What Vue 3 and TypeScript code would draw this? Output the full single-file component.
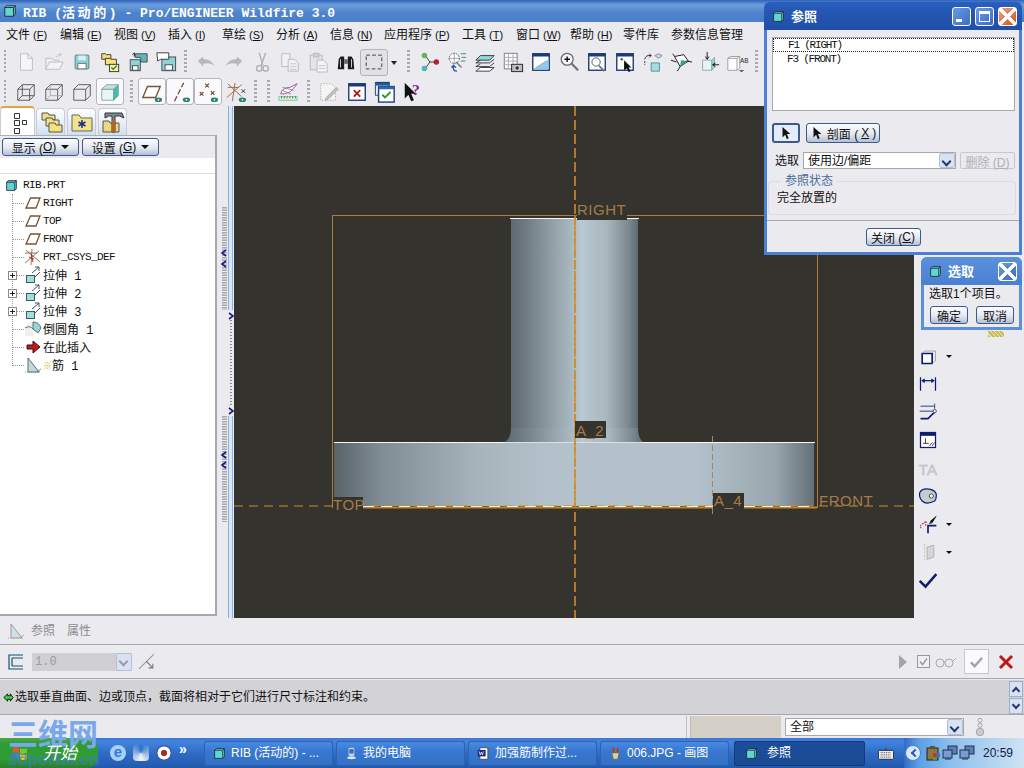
<script setup lang="ts">
const menus = [
  { name: "文件", key: "F" },
  { name: "编辑", key: "E" },
  { name: "视图", key: "V" },
  { name: "插入", key: "I" },
  { name: "草绘", key: "S" },
  { name: "分析", key: "A" },
  { name: "信息", key: "N" },
  { name: "应用程序", key: "P", cls: "wide" },
  { name: "工具", key: "T" },
  { name: "窗口", key: "W" },
  { name: "帮助", key: "H", cls: "tight" },
  { name: "零件库", cls: "lib" },
  { name: "参数信息管理" },
];

const topA = ["new", "open", "save", "saveall", "savecopy", "backup"];
const topB = ["undo", "redo", "cut", "copy", "paste", "binoc"];
const topC = ["dtree", "find", "layers", "tablecam", "viewwin", "zoom", "zoomwin", "pickwin", "orient", "spin", "datum", "annot"];
const secA = [
  { id: "wire" },
  { id: "hidden" },
  { id: "nohidden" },
  { id: "shaded", on: true },
];
const secB = [
  { id: "planeeye", on: true },
  { id: "axiseye", on: true },
  { id: "pointeye", on: true },
  { id: "csyseye" },
];
const secC = ["delwin", "checkwin", "helpq"];

const tree = [
  { icon: "t-plane", text: "RIGHT" },
  { icon: "t-plane", text: "TOP" },
  { icon: "t-plane", text: "FRONT" },
  { icon: "t-csys", text: "PRT_CSYS_DEF" },
  { icon: "t-ext", text: "拉伸 1", cn: true, plus: true },
  { icon: "t-ext", text: "拉伸 2", cn: true, plus: true },
  { icon: "t-ext", text: "拉伸 3", cn: true, plus: true },
  { icon: "t-round", text: "倒圆角 1", cn: true },
  { icon: "t-insert", text: "在此插入", cn: true },
  { icon: "t-rib", text: "筋 1", cn: true, star: true },
];

const sideIcons = ["s-box", "s-dim", "s-ref", "s-note", "s-ta", "s-blob", "s-sketch", "s-mirror", "s-ok"];
const sideDrop = ["s-box", "s-sketch", "s-mirror"];

const tasks = [
  { text: "RIB (活动的) - ...", icon: "cube" },
  { text: "我的电脑", icon: "pc" },
  { text: "加强筋制作过...", icon: "word" },
  { text: "006.JPG - 画图", icon: "paint" },
];
</script>

<template>
  <div class="app">
    <svg class="sprite" width="0" height="0">
      <defs>
        <symbol id="cube" viewBox="0 0 16 16"><path d="M2 4l2-2h10v10l-2 2H2z" fill="#5fd6d2" stroke="#223"/><path d="M12 14V4l2-2M12 4H2" fill="none" stroke="#223"/></symbol>
        <symbol id="cursor" viewBox="0 0 16 16"><path d="M4 1v12l3-3 2 5 2-1-2-5h4z" fill="#111"/></symbol>

        <symbol id="new" viewBox="0 0 24 24"><path d="M6 3h8l5 5v13H6z" fill="#f6f6f6" stroke="#bcbcc0"/><path d="M14 3v5h5" fill="none" stroke="#bcbcc0"/></symbol>
        <symbol id="open" viewBox="0 0 24 24"><path d="M3 20V8h7l2 2h5v2" fill="#efeff0" stroke="#bcbcc0"/><path d="M3 20l4-8h15l-4 8z" fill="#f3f3f4" stroke="#bcbcc0"/><path d="M14 7q3-4 6-3l-2-2m2 2l-2 2" fill="none" stroke="#bcbcc0"/></symbol>
        <symbol id="save" viewBox="0 0 24 24"><rect x="4.500" y="4.500" width="15" height="15" rx="1" fill="#8ed5d2" stroke="#5f7480"/><rect x="8" y="5" width="8" height="5" fill="#d9f2f1"/><rect x="7.500" y="13.500" width="9" height="6" fill="#fff" stroke="#5f7480"/></symbol>
        <symbol id="saveall" viewBox="0 0 24 24"><path d="M3 9V3h4l1 1h5v5z" fill="#f5e27a" stroke="#333"/><path d="M7 15V8h5l1 1h6v6z" fill="#f5e27a" stroke="#333"/><rect x="11.500" y="14.500" width="10" height="8" fill="#fbeea6" stroke="#333"/><path d="M13.500 18l2 2 4-4" fill="none" stroke="#2a8a2a" stroke-width="1.500"/></symbol>
        <symbol id="savecopy" viewBox="0 0 24 24"><rect x="3.500" y="9.500" width="11" height="12" fill="#8ed5d2" stroke="#445"/><rect x="6" y="16" width="6" height="5" fill="#fff" stroke="#445"/><path d="M9 3h13v9h-7V7H9z" fill="#5fb7b5" stroke="#445"/><path d="M8 6V2M8 2l-2 2" fill="none" stroke="#111"/></symbol>
        <symbol id="backup" viewBox="0 0 24 24"><rect x="7.500" y="6.500" width="15" height="15" fill="#8ed5d2" stroke="#445"/><rect x="11" y="15" width="8" height="6" fill="#fff" stroke="#445"/><path d="M2 2h13v7h-9l-3 2z" fill="#fff" stroke="#333"/></symbol>
        <symbol id="undo" viewBox="0 0 24 24"><path d="M3 11l6-5v3q8-1 12 7-5-4-12-2v3z" fill="#b8b8bc"/></symbol>
        <symbol id="redo" viewBox="0 0 24 24"><path d="M21 11l-6-5v3q-8-1-12 7 5-4 12-2v3z" fill="#b8b8bc"/></symbol>
        <symbol id="cut" viewBox="0 0 24 24"><path d="M9 2l4 14M16 2l-5 14" stroke="#b0b0b4" stroke-width="1.500" fill="none"/><circle cx="9" cy="19" r="3" fill="none" stroke="#b0b0b4" stroke-width="1.500"/><circle cx="16" cy="19" r="3" fill="none" stroke="#b0b0b4" stroke-width="1.500"/></symbol>
        <symbol id="copy" viewBox="0 0 24 24"><path d="M3 3h9v14H3z" fill="#f2f2f2" stroke="#b8b8bc"/><path d="M10 9h7l4 4v9H10z" fill="#f2f2f2" stroke="#b8b8bc"/><path d="M12 14h7M12 17h7M12 20h7" stroke="#c4c4c8"/></symbol>
        <symbol id="paste" viewBox="0 0 24 24"><rect x="3.500" y="4.500" width="13" height="16" fill="#e4e4e6" stroke="#b8b8bc"/><rect x="7" y="2.500" width="6" height="4" fill="#d0d0d2" stroke="#b8b8bc"/><path d="M11 10h7l4 4v9H11z" fill="#f4f4f4" stroke="#b8b8bc"/><path d="M13 16h7M13 19h7" stroke="#c4c4c8"/></symbol>
        <symbol id="binoc" viewBox="0 0 24 24"><path d="M4 9l2-3h4v14H3zM20 9l-2-3h-4v14h7z" fill="#1c1c1c"/><rect x="10" y="9" width="4" height="5" fill="#666"/><path d="M6 9v9M18 9v9" stroke="#ddd"/></symbol>
        <symbol id="selbox" viewBox="0 0 24 24"><rect x="3.500" y="4.500" width="17" height="15" fill="none" stroke="#333" stroke-dasharray="4 2.500"/></symbol>

        <symbol id="dtree" viewBox="0 0 24 24"><path d="M8 5l5 7h8M13 12l-5 7" stroke="#333" fill="none"/><circle cx="7" cy="5" r="3" fill="#5cb85c"/><circle cx="20" cy="12" r="3" fill="#b32030"/><circle cx="7" cy="19" r="3" fill="#4cb8b8"/></symbol>
        <symbol id="find" viewBox="0 0 24 24"><circle cx="9" cy="8" r="5.500" fill="#fff" stroke="#555" stroke-dasharray="2 1"/><path d="M9 2v12M3 8h12" stroke="#777" stroke-width=".7"/><path d="M16 3h6M17 7h5M16 11h5" stroke="#4a7d80"/><path d="M12 22q-5 0-4-6l-2 2m2-2l3 2" fill="none" stroke="#2450a8" stroke-width="1.500"/><path d="M11 12l6 6" stroke="#777" stroke-width="1.500"/></symbol>
        <symbol id="layers" viewBox="0 0 24 24"><path d="M7 5h15l-5 5H2z" fill="#8edcd8" stroke="#334"/><path d="M2 13l5-3M22 9l-5 4H2M2 17l5-3M22 13l-5 4H2" fill="none" stroke="#334"/><path d="M7 18h15l-5 4H2z" fill="#fff" stroke="#334"/></symbol>
        <symbol id="tablecam" viewBox="0 0 24 24"><rect x="2.500" y="2.500" width="14" height="17" fill="#fff" stroke="#777"/><path d="M2 7h15M2 11h15M2 15h15M7 3v17M12 3v17" stroke="#aaa"/><rect x="10.500" y="14.500" width="12" height="8" fill="#bbb" stroke="#222"/><circle cx="16.500" cy="18.500" r="2.500" fill="#333" stroke="#eee"/></symbol>
        <symbol id="viewwin" viewBox="0 0 24 24"><rect x="3" y="3" width="18" height="18" fill="#fff" stroke="#1d3a78" stroke-width="1.500"/><rect x="3" y="3" width="18" height="3" fill="#1d3a78"/><path d="M4 20l16-11v11z" fill="#8ec8ea"/><path d="M5 19l11-7" stroke="#777" stroke-dasharray="1 1"/></symbol>
        <symbol id="zoom" viewBox="0 0 24 24"><circle cx="10" cy="9" r="6.500" fill="#f6f6f6" stroke="#666" stroke-width="1.300"/><path d="M10 6v6M7 9h6" stroke="#111" stroke-width="1.500"/><path d="M15 14l7 7" stroke="#777" stroke-width="2.500"/></symbol>
        <symbol id="zoomwin" viewBox="0 0 24 24"><rect x="3" y="3" width="18" height="18" fill="#fff" stroke="#1d3a78" stroke-width="1.500"/><rect x="3" y="3" width="18" height="3" fill="#1d3a78"/><circle cx="11" cy="12" r="4.500" fill="#fff" stroke="#555"/><path d="M14 16l6 6" stroke="#777" stroke-width="2"/></symbol>
        <symbol id="pickwin" viewBox="0 0 24 24"><rect x="3" y="3" width="18" height="18" fill="#fff" stroke="#1d3a78" stroke-width="1.500"/><rect x="3" y="3" width="18" height="3" fill="#1d3a78"/><path d="M10 9h-3M8.500 7.500v3" stroke="#333"/><path d="M11 10v11l3-2 2 4 2-1-2-4h3z" fill="#111"/></symbol>
        <symbol id="orient" viewBox="0 0 24 24"><path d="M14 5l4-2 4 2-4 3z" fill="#cfd8e2" stroke="#789"/><path d="M10 13h9v9h-9z" fill="#9fe0dc" stroke="#5b8a90"/><path d="M3 9q1-5 7-4m0 0l-2-2m2 2l-2 2" fill="none" stroke="#222"/><path d="M3 11v4" stroke="#222" stroke-dasharray="2 1"/></symbol>
        <symbol id="spin" viewBox="0 0 24 24"><path d="M5 6l10-2 5 7-9 6z" fill="#fff" stroke="#111"/><path d="M12 10l8 1-9 6z" fill="#3c9c90"/><path d="M1 10l6 2M18 11l6 1M11 17l-3 5M5 6L3 3" stroke="#111" fill="none"/></symbol>
        <symbol id="datum" viewBox="0 0 24 24"><path d="M5 10h10v11H5z" fill="#e4f6f6" stroke="#8aa"/><path d="M15 10l3-3v11l-3 3z" fill="#8edcd8" stroke="#8aa"/><path d="M10 1v8M8 6l2 3 2-3M23 15h-7M19 13l-3 2 3 2" stroke="#111" fill="none"/></symbol>
        <symbol id="annot" viewBox="0 0 24 24"><path d="M2 8l3-2h10v13l-3 2H2z" fill="#fff" stroke="#999"/><path d="M12 21V8l3-2M12 8H2" fill="none" stroke="#999"/><path d="M14 21l3 2 3-2z" fill="#333"/></symbol>

        <symbol id="wire" viewBox="0 0 24 24"><path d="M3 9h13v12H3zM8 4h13v12H8zM3 9l5-5M16 9l5-5M3 21l5-5M16 21l5-5" fill="none" stroke="#555"/></symbol>
        <symbol id="hidden" viewBox="0 0 24 24"><path d="M3 9h13v12H3zM3 9l5-5h13v12l-5 5M16 9l5-5" fill="none" stroke="#555"/><path d="M8 4v12h13M8 16l-5 5" fill="none" stroke="#aaa"/></symbol>
        <symbol id="nohidden" viewBox="0 0 24 24"><path d="M3 9h13v12H3zM3 9l5-5h13v12l-5 5M16 9l5-5" fill="none" stroke="#555"/></symbol>
        <symbol id="shaded" viewBox="0 0 24 24"><path d="M3 9h13v12H3z" fill="#e6f6f4" stroke="#99a"/><path d="M3 9l5-5h13l-5 5z" fill="#bfe4e0" stroke="#99a"/><path d="M16 9l5-5v12l-5 5z" fill="#49b8b4" stroke="#6a9"/></symbol>
        <g id="eye"><ellipse cx="19" cy="20.500" rx="4" ry="2.500" fill="#2e7f70"/><circle cx="19" cy="20.500" r="1" fill="#dff"/></g>
        <symbol id="planeeye" viewBox="0 0 24 24"><path d="M2 18l5-12h14l-5 12z" fill="#fff" stroke="#7a5238" stroke-width="1.500"/><use href="#eye"/></symbol>
        <symbol id="axiseye" viewBox="0 0 24 24"><path d="M6 22L16 2" stroke="#7a5238" stroke-width="1.500" stroke-dasharray="6 2.500"/><use href="#eye"/></symbol>
        <symbol id="pointeye" viewBox="0 0 24 24"><path d="M9 3l4 4M13 3L9 7M3 12l4 4M7 12l-4 4M15 11l4 4M19 11l-4 4" stroke="#7a5238" stroke-width="1.300"/><use href="#eye"/></symbol>
        <symbol id="csyseye" viewBox="0 0 24 24"><path d="M3 7h12M11 2l-3 20M3 3l15 14M2 18l16-14" stroke="#a0623a"/><path d="M18 9l4 4M22 9l-4 4" stroke="#333"/><use href="#eye"/></symbol>
        <symbol id="measure" viewBox="0 0 24 24"><path d="M4 14q2-7 10-7l8-4-4 5q-3 5-10 6z" fill="#fff" stroke="#b040a8"/><path d="M5 10l10 4M6 7l12 3" stroke="#888"/><path d="M2 17h20v4H2z" fill="#e8f0f0" stroke="#6c8"/><path d="M5 17v2M8 17v2M11 17v2M14 17v2M17 17v2M20 17v2" stroke="#555"/></symbol>
        <symbol id="regen" viewBox="0 0 24 24"><path d="M3 3h12l4 4v14H3z" fill="#f4f4f4" stroke="#aaa" stroke-dasharray="1.500 1.500"/><path d="M22 9L11 20l-3 1 1-3L20 7z" fill="#c0c0c4" stroke="#aaa"/></symbol>
        <symbol id="delwin" viewBox="0 0 24 24"><rect x="3" y="3" width="18" height="18" fill="#fff" stroke="#1d3a78" stroke-width="1.500"/><rect x="3" y="3" width="18" height="3" fill="#1d3a78"/><path d="M8.500 10l7 7M15.500 10l-7 7" stroke="#b01818" stroke-width="2"/></symbol>
        <symbol id="checkwin" viewBox="0 0 24 24"><path d="M2 1h15v4H2z" fill="#1d5a9a"/><rect x="1.500" y="1.500" width="15" height="14" fill="none" stroke="#246"/><rect x="5" y="6" width="17" height="17" fill="#fff" stroke="#1d3a78" stroke-width="1.500"/><rect x="5" y="6" width="17" height="3" fill="#2a6ab8"/><path d="M9 15l3 3 6-6" fill="none" stroke="#2a9a2a" stroke-width="2"/></symbol>
        <symbol id="helpq" viewBox="0 0 24 24"><path d="M3 2v17l4-4 3 7 3-1-3-7h5z" fill="#111"/><text x="11" y="15" font-size="17" font-weight="700" font-family="Liberation Serif, serif" fill="#7c1e88">?</text></symbol>

        <symbol id="tab-tree" viewBox="0 0 24 24"><path d="M8.500 3.500h5v5h-5zM8.500 10.500h5v5h-5zM8.500 18.500h5v5h-5zM16.500 10.500h4v4h-4z" fill="#fff" stroke="#333"/></symbol>
        <symbol id="tab-folders" viewBox="0 0 24 24"><path d="M3 10V3h6l1 2h6v5z" fill="#efe08a" stroke="#555"/><path d="M7 16V8h6l1 2h6v6z" fill="#efe08a" stroke="#555"/><path d="M10 22v-9h6l1 2h6v7z" fill="#f5e27a" stroke="#555"/></symbol>
        <symbol id="tab-star" viewBox="0 0 24 24"><path d="M2 21V5h7l2 3h11v13z" fill="#f2e28a" stroke="#666"/><path d="M12 10v8M8.500 12l7 4M15.500 12l-7 4" stroke="#1a2f88" stroke-width="1.500"/></symbol>
        <symbol id="tab-tools" viewBox="0 0 24 24"><path d="M2 22V11h6l1 2h9v9z" fill="#efd777" stroke="#555"/><path d="M4 3h17l2 5q-4-3-9-2v16h-3V6q-3-1-7 2z" fill="#7b8994" stroke="#333"/><path d="M11 10h3v12h-3z" fill="#b5651d"/></symbol>

        <symbol id="t-plane" viewBox="0 0 18 18"><path d="M2 14L6.500 4H16l-4 10z" fill="#fff" stroke="#7a5238" stroke-width="1.300"/></symbol>
        <symbol id="t-csys" viewBox="0 0 18 18"><path d="M1 5h12M8 1l-1 16M2 2l14 12M1 15L15 3" stroke="#7a5238" stroke-width=".8"/><path d="M5 9l5 2M7 6l2 8" stroke="#b03020"/></symbol>
        <symbol id="t-ext" viewBox="0 0 18 18"><rect x="2.500" y="9.500" width="8" height="7" fill="#9ae0d8" stroke="#456"/><path d="M8 7l7-6M11 1h4v4" fill="none" stroke="#456"/><path d="M11 11l5-5" stroke="#456"/></symbol>
        <symbol id="t-round" viewBox="0 0 18 18"><path d="M1 16V8q2-6 8-6v14z" fill="#eef0ea"/><path d="M9 2q6 0 8 6l-3 5-5-4z" fill="#8ed8d8" stroke="#667"/><path d="M1 8q5-3 8 1" fill="none" stroke="#667"/></symbol>
        <symbol id="t-insert" viewBox="0 0 18 18"><path d="M3 7h6V3l7 6-7 6v-4H3z" fill="#c81818" stroke="#311"/></symbol>
        <symbol id="t-rib" viewBox="0 0 18 18"><path d="M4 2v14h11z" fill="#bcdcdc" stroke="#667"/><path d="M1 16h16" stroke="#888" stroke-dasharray="1 1"/><path d="M12 16l5-3" stroke="#888"/></symbol>

        <symbol id="s-box" viewBox="0 0 24 24"><path d="M5 9h12v12H5z" fill="#fff" stroke="#101c70" stroke-width="2"/><path d="M5 9l3-3h13v12l-4 3" fill="none" stroke="#9a9aa0"/></symbol>
        <symbol id="s-dim" viewBox="0 0 24 24"><path d="M3 4v16M21 4v16" stroke="#101c70" stroke-width="1.500"/><path d="M5 8h14" stroke="#101c70" stroke-width="1.500"/><path d="M4 8l4-3v6zM20 8l-4-3v6z" fill="#101c70"/></symbol>
        <symbol id="s-ref" viewBox="0 0 24 24"><path d="M3 5h16M20 2v6M2 11h16" stroke="#101c70"/><path d="M3 20h9l8-8" fill="none" stroke="#101c70" stroke-width="2"/><circle cx="20" cy="11" r="2" fill="#fff" stroke="#333"/></symbol>
        <symbol id="s-note" viewBox="0 0 24 24"><rect x="3" y="3" width="18" height="18" fill="#fff" stroke="#101c70" stroke-width="1.500"/><rect x="3" y="3" width="18" height="4" fill="#101c70"/><path d="M9 10v6M6 16h7M14 19l3-4M17 19l3-4" stroke="#222"/></symbol>
        <symbol id="s-ta" viewBox="0 0 24 24"><text x="1" y="20" font-family="Liberation Sans, sans-serif" font-size="18" fill="#d0d0d4" stroke="#b4b4b8" stroke-width=".5">TA</text></symbol>
        <symbol id="s-blob" viewBox="0 0 24 24"><path d="M2 8q3-6 13-4 7 2 7 7t-2 7q-10 5-15 0Q1 14 2 8z" fill="#c4ccd0" stroke="#101c70" stroke-width="1.500"/><circle cx="16" cy="12" r="2.500" fill="#fff" stroke="#333"/></symbol>
        <symbol id="s-sketch" viewBox="0 0 24 24"><path d="M4 17q-3-2 1-5t5-3l-1 5" fill="none" stroke="#b03838" stroke-dasharray="2 1" stroke-width="1.300"/><path d="M12 23v-9h10" fill="none" stroke="#101c70" stroke-width="2"/><path d="M22 2l-8 7 3 2 5-8zM13 12l2-3 2 2z" fill="#111"/></symbol>
        <symbol id="s-mirror" viewBox="0 0 24 24"><path d="M8 2v20" stroke="#bbb" stroke-dasharray="3 1.500"/><path d="M11 6l8-2v14l-8 3z" fill="#d6d6da" stroke="#aaa"/></symbol>
        <symbol id="s-ok" viewBox="0 0 24 24"><path d="M2 13l7 7L22 5" fill="none" stroke="#101c70" stroke-width="3"/></symbol>

        <symbol id="pc" viewBox="0 0 18 18"><rect x="5" y="1" width="8" height="12" rx="2" fill="#bcd4f0"/><rect x="6" y="3" width="6" height="6" fill="#3a6ac0"/><ellipse cx="9" cy="15" rx="6" ry="2" fill="#dfe8f2"/></symbol>
        <symbol id="word" viewBox="0 0 18 18"><path d="M4 1h11v16H4z" fill="#fff" stroke="#333"/><rect x="1" y="4" width="11" height="9" fill="#1c2a80"/><path d="M3 6l1.500 5 1.500-4 1.500 4L9 6" stroke="#fff" fill="none"/></symbol>
        <symbol id="paint" viewBox="0 0 18 18"><path d="M4 8h10l-2 9H6z" fill="#d7d1b0" stroke="#665"/><path d="M6 8V1M9 8V2M12 8V1" stroke="#c03020" stroke-width="2"/><path d="M9 8V2" stroke="#3a9a40" stroke-width="2"/></symbol>
      </defs>
    </svg>

    <header class="titlebar">
      <svg class="title-cube"><use href="#cube" /></svg>
      <span>RIB (<span class="title-cn">活动的</span>) - Pro/ENGINEER Wildfire 3.0</span>
    </header>

    <nav class="menubar">
      <span v-for="m in menus" :key="m.name" class="menu-item" :class="m.cls">
        {{ m.name }}<span v-if="m.key" class="key"> (<u>{{ m.key }}</u>)</span>
      </span>
    </nav>

    <section class="toolbars">
      <div class="tool-row">
        <i class="grip first"></i>
        <span v-for="t in topA" :key="t" class="tool"><svg><use :href="'#' + t" /></svg></span>
        <i class="grip"></i>
        <span v-for="t in topB" :key="t" class="tool"><svg><use :href="'#' + t" /></svg></span>
        <span class="tool active-sel"><svg><use href="#selbox" /></svg></span>
        <span class="drop-caret"></span>
        <i class="grip"></i>
        <span v-for="t in topC" :key="t" class="tool">
          <svg>
            <use :href="'#' + t" />
            <text v-if="t === 'annot'" x="14" y="12" class="ab">AB</text>
          </svg>
        </span>
        <i class="grip"></i>
      </div>
      <div class="tool-row">
        <i class="grip first"></i>
        <span v-for="t in secA" :key="t.id" class="tool" :class="{ on: t.on }"><svg><use :href="'#' + t.id" /></svg></span>
        <i class="grip roomy"></i>
        <span v-for="t in secB" :key="t.id" class="tool" :class="{ on: t.on }"><svg><use :href="'#' + t.id" /></svg></span>
        <i class="grip"></i>
        <i class="grip pair"></i>
        <span class="tool"><svg><use href="#measure" /></svg></span>
        <i class="grip roomy-left"></i>
        <span class="tool"><svg><use href="#regen" /></svg></span>
        <span v-for="t in secC" :key="t" class="tool"><svg><use :href="'#' + t" /></svg></span>
      </div>
    </section>

    <main class="workspace">
      <aside class="left">
        <div class="tabs">
          <span class="tab current"><svg><use href="#tab-tree" /></svg></span>
          <span class="tab"><svg><use href="#tab-folders" /></svg></span>
          <span class="tab"><svg><use href="#tab-star" /></svg></span>
          <span class="tab"><svg><use href="#tab-tools" /></svg></span>
        </div>
        <div class="panel">
          <div class="panel-btns">
            <button class="xbtn panel-btn">显示 (<u>O</u>)<b class="caret"></b></button>
            <button class="xbtn panel-btn">设置 (<u>G</u>)<b class="caret"></b></button>
          </div>
          <div class="panel-blank"></div>
          <div class="tree">
            <div class="tree-row root">
              <svg class="root-cube"><use href="#cube" /></svg>
              <span class="lat">RIB.PRT</span>
            </div>
            <i class="tree-stem"></i>
            <div v-for="n in tree" :key="n.text" class="tree-row">
              <span class="gutter"><b v-if="n.plus" class="plus"></b></span>
              <svg class="node-icon"><use :href="'#' + n.icon" /></svg>
              <span v-if="n.star" class="star">※</span>
              <span :class="n.cn ? 'cn' : 'lat'">{{ n.text }}</span>
            </div>
          </div>
        </div>
      </aside>

      <svg class="sash" viewBox="217 106 17 512">
        <path d="M228.500 106V310M232.500 106V310M228.500 416V618M232.500 416V618" stroke="#8cb0e0" />
        <path d="M230.500 106V310M230.500 416V618" stroke="#d8e6f6" stroke-width="3" />
        <path d="M224.500 207V310M224.500 416V522" stroke="#a8a8ac" stroke-width="5" stroke-dasharray="1.500 1" />
        <path d="M231 320V405" stroke="#223" stroke-dasharray="1 2" />
        <path d="M226 250l-4 3 4 3M226 261l-4 3 4 3M226 452l-4 3 4 3M226 462l-4 3 4 3M229 313l4 3-4 3M229 408l4 3-4 3" fill="none" stroke="#14208a" stroke-width="1.600" />
      </svg>

      <svg class="viewport" viewBox="234 106 680 512">
        <defs>
          <linearGradient id="cyl">
            <stop offset="0" stop-color="#5d686f" />
            <stop offset=".25" stop-color="#85929a" />
            <stop offset=".48" stop-color="#aab9c1" />
            <stop offset=".55" stop-color="#b9c9d1" />
            <stop offset=".75" stop-color="#a9b7bf" />
            <stop offset=".93" stop-color="#7b878f" />
            <stop offset="1" stop-color="#5f6a71" />
          </linearGradient>
          <linearGradient id="base">
            <stop offset="0" stop-color="#59636a" />
            <stop offset=".1" stop-color="#818d95" />
            <stop offset=".3" stop-color="#a6b4bc" />
            <stop offset=".45" stop-color="#b3c2ca" />
            <stop offset=".75" stop-color="#b3c2ca" />
            <stop offset=".92" stop-color="#98a5ad" />
            <stop offset="1" stop-color="#646f77" />
          </linearGradient>
        </defs>
        <rect x="332.500" y="215.500" width="485" height="292" fill="none" stroke="#b07c3c" />
        <rect x="511" y="218" width="127" height="224" fill="url(#cyl)" />
        <path d="M511 428q0 10-6 14h138q-5-4-5-14z" fill="url(#cyl)" />
        <rect x="334" y="442" width="480" height="64" fill="url(#base)" />
        <path d="M510 218.500h117M627 218.500h12M334 442.500h171M643 442.500h172" stroke="#f4f8fa" />
        <path d="M505 442.500h138" stroke="#d6e0e6" />
        <path d="M575 106V618" stroke="#d8932c" stroke-width="1.500" stroke-dasharray="10 4" />
        <path d="M575 216V506" stroke="#d08a20" stroke-width="1.500" stroke-dasharray="9 2" />
        <path d="M234 506H914" stroke="#d08a2a" stroke-dasharray="9 6" />
        <path d="M363 507.500H713M744 507.500H817" stroke="#c8851f" stroke-width="2" />
        <path d="M363 506.500H713M744 506.500H815" stroke="#f0f0f0" stroke-dasharray="11 7" />
        <path d="M712.500 436V514" stroke="#a08a60" stroke-dasharray="6 3" />
        <rect x="577" y="200" width="50" height="20" fill="#35332e" />
        <rect x="575" y="421" width="31" height="17" fill="#35332e" />
        <rect x="713" y="493" width="31" height="15" fill="#35332e" />
        <rect x="333" y="497" width="30" height="11" fill="#35332e" />
        <text class="vlabel" x="577" y="215">RIGHT</text>
        <text class="vlabel" x="576" y="436">A_2</text>
        <text class="vlabel" x="714" y="506">A_4</text>
        <text class="vlabel" x="333" y="510">TOP</text>
        <text class="vlabel" x="819" y="506">FRONT</text>
      </svg>

      <aside class="right-bar">
        <div v-for="s in sideIcons" :key="s" class="side-item">
          <svg><use :href="'#' + s" /></svg>
          <b v-if="sideDrop.includes(s)" class="mini-caret"></b>
        </div>
      </aside>
    </main>

    <section class="dash-tabs">
      <svg class="dash-rib"><use href="#t-rib" /></svg>
      <span>参照</span>
      <span>属性</span>
    </section>

    <section class="dash-ctrl">
      <svg class="bracket" viewBox="0 0 16 16"><path d="M15 1H1v14h14M4 4h11M4 12h11M4 4v8" fill="none" stroke="#14506e" stroke-width="1.200" /></svg>
      <div class="thick">
        <span>1.0</span>
        <b class="combo-btn off"></b>
      </div>
      <svg class="flip" viewBox="0 0 16 16"><path d="M1 15L15 1" stroke="#999" /><path d="M8 8l6 6M14 10v4h-4" fill="none" stroke="#777" /></svg>
      <div class="ctrl-right">
        <i class="play"></i>
        <svg class="check-box" viewBox="0 0 13 13"><rect x=".5" y=".5" width="12" height="12" fill="#f0f0f2" stroke="#999" /><path d="M3 6.500l2.500 3L10 3.500" fill="none" stroke="#999" stroke-width="1.400" /></svg>
        <svg class="glasses" viewBox="0 0 22 12"><circle cx="5" cy="7" r="4" fill="none" stroke="#aaa" /><circle cx="14" cy="7" r="4" fill="none" stroke="#aaa" /><path d="M9 6h1M18 5l3-3" stroke="#aaa" /></svg>
        <span class="accept"><svg viewBox="0 0 16 16"><path d="M2 9l4 4 8-9" fill="none" stroke="#a4a4a8" stroke-width="2.600" /></svg></span>
        <svg class="cancel" viewBox="0 0 16 16"><path d="M2 2l12 12M14 2L2 14" stroke="#c01818" stroke-width="3" /></svg>
      </div>
    </section>

    <section class="message">
      <svg class="msg-arrow" viewBox="0 0 12 12"><path d="M1 6l4-4v2h3V2l3 4-3 4V8H5v2z" fill="#36d050" stroke="#111" /></svg>
      <span>选取垂直曲面、边或顶点，截面将相对于它们进行尺寸标注和约束。</span>
      <div class="msg-scroll">
        <b class="scroll-btn up"></b>
        <b class="scroll-btn"></b>
      </div>
    </section>

    <section class="status">
      <div class="status-gray"></div>
      <div class="filter">
        <span>全部</span>
        <b class="combo-btn"></b>
      </div>
      <svg class="status-ico" viewBox="0 0 12 22"><circle cx="6" cy="3" r="2.500" fill="none" stroke="#999" /><circle cx="6" cy="9" r="2.500" fill="none" stroke="#999" /><circle cx="6" cy="17" r="4.500" fill="#ccc" stroke="#999" /></svg>
    </section>

    <footer class="taskbar">
      <div class="start">
        <svg class="flag" viewBox="0 0 16 16"><path d="M1 3q3-2 6 0v5q-3-2-6 0z" fill="#e8572a" /><path d="M8 3q3 2 7 0v5q-4 2-7 0z" fill="#7cc23c" /><path d="M1 9q3-2 6 0v5q-3-2-6 0z" fill="#3d82dc" /><path d="M8 9q3 2 7 0v5q-4 2-7 0z" fill="#f4c21e" /></svg>
        <em>开始</em>
      </div>
      <div class="quick">
        <span class="q ie">e</span>
        <span class="q out"></span>
        <span class="q media"></span>
        <span class="more">»</span>
      </div>
      <div v-for="t in tasks" :key="t.text" class="task">
        <svg><use :href="'#' + t.icon" /></svg>
        <span>{{ t.text }}</span>
      </div>
      <div class="task current">
        <svg><use href="#cube" /></svg>
        <span>参照</span>
      </div>
      <svg class="keyboard" viewBox="0 0 18 14"><rect x=".5" y="3.500" width="17" height="10" rx="1" fill="#eee" stroke="#223" /><path d="M3 6h12M3 8.500h12M3 11h12" stroke="#334" stroke-dasharray="1 1" /><path d="M9 3V1" stroke="#223" /></svg>
      <div class="tray">
        <span class="tray-arrow"></span>
        <svg viewBox="0 0 16 16"><rect x="2" y="3" width="11" height="12" fill="#8a7a40" stroke="#221" /><rect x="5" y="1" width="5" height="3" fill="#554" /><path d="M8 8h4v4H8z" fill="#d03030" /><path d="M12 8h3v4h-3z" fill="#3a70d0" /><path d="M8 12h4v3H8z" fill="#40a040" /></svg>
        <svg viewBox="0 0 16 16"><rect x="6" y="1" width="9" height="8" fill="#5a7ec0" stroke="#234" /><rect x="1" y="5" width="9" height="8" fill="#7a9ad4" stroke="#234" /><path d="M3 14h6" stroke="#234" /></svg>
        <svg viewBox="0 0 16 16"><rect x="6" y="1" width="9" height="8" fill="#5a7ec0" stroke="#234" /><rect x="1" y="5" width="9" height="8" fill="#7a9ad4" stroke="#234" /><path d="M3 14h6" stroke="#234" /></svg>
        <time>20:59</time>
      </div>
    </footer>

    <div class="watermark">
      <strong>三维网</strong>
      <small>3dportal.cn</small>
    </div>

    <div class="win ref-win">
      <div class="win-title">
        <svg class="win-cube"><use href="#cube" /></svg>
        <span class="win-name">参照</span>
        <span class="cap-btn"><i class="cap-min"></i></span>
        <span class="cap-btn"><i class="cap-max"></i></span>
        <span class="cap-btn red"><i class="cap-x"></i></span>
      </div>
      <div class="win-body">
        <div class="ref-list">
          <div class="ref-row focus">F1 (RIGHT)</div>
          <div class="ref-row">F3 (FRONT)</div>
        </div>
        <div class="ref-btns">
          <button class="xbtn pressed"><svg><use href="#cursor" /></svg></button>
          <button class="xbtn section"><svg><use href="#cursor" /></svg>剖面 (<u>X</u>)</button>
        </div>
        <div class="ref-select">
          <label>选取</label>
          <div class="ref-combo">
            <span>使用边/偏距</span>
            <b class="combo-btn"></b>
          </div>
          <button class="del" disabled>删除 (<u>D</u>)</button>
        </div>
        <fieldset class="ref-state">
          <legend>参照状态</legend>
          <p>完全放置的</p>
        </fieldset>
        <div class="ref-foot">
          <button class="xbtn close-btn">关闭 (<u>C</u>)</button>
        </div>
      </div>
    </div>

    <div class="win pick-win">
      <div class="win-title">
        <svg class="win-cube"><use href="#cube" /></svg>
        <span class="win-name">选取</span>
        <span class="cap-btn"><i class="cap-x"></i></span>
      </div>
      <div class="win-body pick-body">
        <p>选取1个项目。</p>
        <div class="pick-btns">
          <button class="xbtn">确定</button>
          <button class="xbtn">取消</button>
        </div>
      </div>
    </div>
    <i class="behind-hatch"></i>
  </div>
</template>

<style scoped>
.app {
  position: relative;
  width: 1024px;
  height: 768px;
  display: flex;
  flex-direction: column;
  overflow: hidden;
  background: #ebeaef;
  color: #111;
  font: 12px/1 "Liberation Sans", "Noto Sans CJK SC", sans-serif;
}
.sprite {
  position: absolute;
}
svg {
  display: block;
  flex: none;
}
u {
  text-decoration: underline;
}

/* title + menu */
.titlebar {
  height: 22px;
  flex: none;
  display: flex;
  align-items: center;
  gap: 6px;
  padding-left: 3px;
  box-sizing: border-box;
  background: linear-gradient(#2f62bc 0, #6c9ddb 22%, #4d83cc 60%, #4a7fca 100%);
  color: #fff;
  font: bold 13px "Liberation Mono", "Noto Sans CJK SC", monospace;
}
.title-cube {
  width: 14px;
  height: 14px;
}
.title-cn {
  letter-spacing: 2.6px;
}
.menubar {
  height: 25px;
  flex: none;
  display: flex;
  align-items: center;
  gap: 7px;
  padding-left: 6px;
  white-space: pre;
}
.menu-item {
  min-width: 47px;
}
.menu-item.wide {
  min-width: 71px;
}
.menu-item.tight {
  min-width: 46px;
}
.menu-item.lib {
  min-width: 41px;
}
.key {
  font-size: 11px;
}

/* toolbars */
.toolbars {
  height: 59px;
  flex: none;
}
.tool-row {
  height: 30px;
  display: flex;
  align-items: center;
}
.tool-row + .tool-row {
  height: 29px;
}
.tool {
  width: 28px;
  height: 27px;
  flex: none;
  display: flex;
  align-items: center;
  justify-content: center;
  box-sizing: border-box;
}
.tool svg {
  width: 22px;
  height: 22px;
  overflow: visible;
}
.tool.on {
  background: #fafafc;
  border: 1px solid #b4b4ba;
  border-radius: 3px;
}
.active-sel {
  background: #e2e2e6;
  border: 1px solid #b4b4ba;
  border-radius: 3px;
}
.ab {
  font-size: 7px;
  fill: #333;
  font-family: "Liberation Mono", monospace;
}
.drop-caret {
  width: 15px;
  position: relative;
  height: 27px;
}
.drop-caret::after {
  content: "";
  position: absolute;
  left: 3px;
  top: 12px;
  border: 3px solid transparent;
  border-top: 4px solid #222;
}
.grip {
  width: 3px;
  height: 24px;
  margin: 0 5px 0 4px;
  flex: none;
  background: repeating-linear-gradient(#a9a9ad 0 2px, transparent 2px 4px);
}
.grip.first {
  margin: 0 6px 0 4px;
  width: 2px;
}
.grip.roomy {
  margin: 0 5px 0 6px;
}
.grip.pair {
  margin: 0 4px 0 5px;
}
.grip.roomy-left {
  margin: 0 5px;
}

/* main row */
.workspace {
  height: 512px;
  flex: none;
  display: flex;
}
.left {
  width: 217px;
  flex: none;
  display: flex;
  flex-direction: column;
}
.tabs {
  height: 29px;
  display: flex;
  align-items: flex-end;
  gap: 2px;
  flex: none;
}
.tab {
  width: 29px;
  height: 27px;
  display: flex;
  align-items: center;
  justify-content: center;
  box-sizing: border-box;
  border: 1px solid #c8ccd4;
  border-bottom: 0;
  border-radius: 4px 4px 0 0;
  background: linear-gradient(#fff, #cfe0f2);
}
.tab.current {
  width: 35px;
  height: 29px;
  margin-right: -1px;
  background: #fff;
  border-top: 2px solid #e8a040;
}
.tab svg {
  width: 24px;
  height: 24px;
}
.panel {
  flex: 1;
  margin-bottom: 2px;
  background: #fff;
  border-right: 2px solid #a8a8ac;
  border-bottom: 2px solid #a8a8ac;
  display: flex;
  flex-direction: column;
}
.panel-btns {
  height: 22px;
  flex: none;
  display: flex;
  align-items: center;
  gap: 3px;
  padding-left: 2px;
  background: #ebeaef;
  border-top: 1px solid #b0b0b4;
}
.xbtn {
  height: 18px;
  padding: 0;
  display: flex;
  align-items: center;
  justify-content: center;
  box-sizing: border-box;
  border: 1px solid #3c5a8c;
  border-radius: 3px;
  background: linear-gradient(#fdfdff, #e4e8f2 55%, #b4c0d6);
  color: #111;
  font: 12px "Liberation Sans", "Noto Sans CJK SC", sans-serif;
  white-space: pre;
}
.panel-btn {
  width: 77px;
  gap: 0;
}
.caret {
  width: 0;
  height: 0;
  margin-left: 5px;
  border: 4px solid transparent;
  border-top: 4px solid #111;
  border-bottom: 0;
}
.panel-blank {
  height: 15px;
  flex: none;
  border-bottom: 1px solid #dcdce0;
}
.tree {
  position: relative;
  padding-top: 2px;
}
.tree-stem {
  position: absolute;
  left: 12px;
  top: 20px;
  height: 172px;
  border-left: 1px dotted #999;
}
.tree-row {
  position: relative;
  height: 18px;
  display: flex;
  align-items: center;
  font: 12px "Liberation Mono", "Noto Sans CJK SC", monospace;
  white-space: pre;
}
.root {
  padding-left: 5px;
  gap: 5px;
}
.root-cube {
  width: 13px;
  height: 13px;
}
.gutter {
  position: relative;
  width: 24px;
  height: 18px;
  flex: none;
}
.gutter::before {
  content: "";
  position: absolute;
  left: 13px;
  right: 0;
  top: 9px;
  border-top: 1px dotted #999;
}
.plus {
  position: absolute;
  z-index: 1;
  left: 8px;
  top: 5px;
  width: 9px;
  height: 9px;
  box-sizing: border-box;
  border: 1px solid #8a8a8a;
  background:
    linear-gradient(#222, #222) center / 5px 1px no-repeat,
    linear-gradient(#222, #222) center / 1px 5px no-repeat,
    #fff;
}
.node-icon {
  width: 18px;
  height: 18px;
  margin-right: 1px;
}
.lat {
  font-size: 11px;
  letter-spacing: -0.6px;
}
.star {
  color: #d8b020;
  font-size: 9px;
  width: 9px;
}

.sash {
  width: 17px;
  height: 512px;
}
.viewport {
  width: 680px;
  height: 512px;
  background: #35332e;
}
.vlabel {
  fill: #a57c48;
  font: 15px "Liberation Sans", sans-serif;
  letter-spacing: 0.5px;
}
.right-bar {
  flex: 1;
  padding: 236px 0 0 3px;
  box-sizing: border-box;
}
.side-item {
  height: 28px;
  display: flex;
  align-items: center;
  position: relative;
  padding-left: 1px;
}
.side-item svg {
  width: 20px;
  height: 20px;
  overflow: visible;
}
.mini-caret {
  margin-left: 8px;
  border: 3px solid transparent;
  border-top: 3px solid #111;
  border-bottom: 0;
}

/* bottom dashboard */
.dash-tabs {
  height: 27px;
  flex: none;
  box-sizing: border-box;
  display: flex;
  align-items: center;
  gap: 12px;
  padding-left: 7px;
  color: #8c8c90;
  border-bottom: 1px solid #a8a8ac;
}
.dash-rib {
  width: 18px;
  height: 18px;
  margin-right: -6px;
  opacity: 0.6;
}
.dash-ctrl {
  height: 34px;
  flex: none;
  box-sizing: border-box;
  display: flex;
  align-items: center;
  padding-left: 8px;
  border-bottom: 1px solid #a8a8ac;
}
.bracket {
  width: 16px;
  height: 16px;
}
.thick {
  width: 100px;
  height: 18px;
  margin-left: 8px;
  display: flex;
  align-items: center;
  justify-content: space-between;
  box-sizing: border-box;
  background: #d0d0d2;
  color: #9a9a9e;
  padding-left: 3px;
  font-family: "Liberation Mono", monospace;
}
.combo-btn {
  width: 16px;
  height: 100%;
  flex: none;
  box-sizing: border-box;
  border: 1px solid #b8c0d0;
  border-radius: 2px;
  background: #d8e2f2;
  position: relative;
}
.combo-btn::after {
  content: "";
  position: absolute;
  left: 3px;
  top: 4px;
  width: 5px;
  height: 5px;
  border: solid #223a70;
  border-width: 0 2px 2px 0;
  transform: rotate(45deg);
}
.combo-btn.off::after {
  border-color: #9a9aa6;
}
.flip {
  width: 17px;
  height: 17px;
  margin-left: 6px;
}
.ctrl-right {
  margin-left: auto;
  display: flex;
  align-items: center;
  padding-right: 10px;
}
.play {
  width: 0;
  height: 0;
  border: 7px solid transparent;
  border-left: 8px solid #a4a4a8;
  border-right: 0;
  margin-right: 10px;
}
.check-box {
  width: 13px;
  height: 13px;
}
.glasses {
  width: 22px;
  height: 12px;
  margin: 0 7px 0 5px;
}
.accept {
  width: 25px;
  height: 25px;
  box-sizing: border-box;
  background: #fafafc;
  border: 1px solid #c8c8cc;
  padding: 4px;
  margin-right: 9px;
}
.cancel {
  width: 16px;
  height: 16px;
}
.message {
  height: 35px;
  flex: none;
  display: flex;
  align-items: center;
  background: #d3d3d7;
  border-bottom: 1px solid #a8a8ac;
  margin-top: 1px;
  padding-left: 3px;
  gap: 1px;
  color: #111;
  box-sizing: border-box;
}
.msg-arrow {
  width: 11px;
  height: 11px;
}
.msg-scroll {
  margin-left: auto;
  margin-right: 1px;
  display: flex;
  flex-direction: column;
  gap: 1px;
}
.scroll-btn {
  display: block;
  width: 14px;
  height: 16px;
  box-sizing: border-box;
  background: #d8e2f2;
  border: 1px solid #9ab0d0;
  position: relative;
}
.scroll-btn::after {
  content: "";
  position: absolute;
  left: 3px;
  top: 3px;
  width: 4px;
  height: 4px;
  border: solid #223a70;
  border-width: 0 2px 2px 0;
  transform: rotate(45deg);
}
.scroll-btn.up::after {
  top: 6px;
  transform: rotate(225deg);
}
.status {
  height: 23px;
  flex: none;
  display: flex;
  padding-left: 687px;
  align-items: center;
}
.status-gray {
  width: 90px;
  height: 22px;
  align-self: flex-end;
  background: #d4d0c8;
  border-left: 1px solid #bbb;
  box-shadow: -3px 0 #ebeaef, -4px 0 #c0c0c4;
  margin-left: 3px;
}
.filter {
  width: 179px;
  height: 18px;
  margin-left: 4px;
  box-sizing: border-box;
  background: #fff;
  border: 1px solid #a8a8b0;
  display: flex;
  align-items: center;
  justify-content: space-between;
  padding-left: 4px;
}
.status-ico {
  width: 10px;
  height: 20px;
  margin-left: 11px;
}

/* taskbar */
.taskbar {
  height: 30px;
  flex: none;
  display: flex;
  align-items: center;
  background: linear-gradient(#3874d4 0, #4384dc 12%, #2f6cc6 50%, #265fb6 85%, #2058ac 100%);
  color: #fff;
}
.start {
  width: 98px;
  height: 30px;
  flex: none;
  box-sizing: border-box;
  padding-left: 12px;
  display: flex;
  align-items: center;
  gap: 15px;
  background: linear-gradient(#4aa84a, #2f9a33 20%, #2e9e34 70%, #2a7e2a);
  border-radius: 0 10px 10px 0;
  font-size: 17px;
}
.start em {
  font-style: italic;
  position: relative;
  z-index: 3;
}
.flag {
  width: 16px;
  height: 16px;
}
.quick {
  width: 106px;
  padding-left: 12px;
  flex: none;
  box-sizing: border-box;
  display: flex;
  align-items: center;
  gap: 7px;
}
.q {
  width: 16px;
  height: 16px;
  border-radius: 50%;
  flex: none;
  background: #e8f0fa;
}
.ie {
  color: #2c7be0;
  text-align: center;
  font: bold 15px/14px "Liberation Sans", sans-serif;
  background: #a8d0f4;
}
.out {
  background: conic-gradient(#2a70d0, #f4f4f4, #2a70d0);
  border-radius: 4px;
}
.media {
  background: radial-gradient(#a03020 25%, #fff 30% 55%, #3a5ab0 60%);
}
.more {
  font: bold 14px "Liberation Sans", sans-serif;
  margin-top: -8px;
}
.task {
  width: 129px;
  height: 25px;
  margin-right: 3px;
  flex: none;
  display: flex;
  align-items: center;
  gap: 5px;
  padding-left: 9px;
  box-sizing: border-box;
  border-radius: 3px;
  background: linear-gradient(#4a8ce4, #3a78d0 40%, #3270c4);
  box-shadow: inset 0 0 0 1px #2c62b0;
  white-space: nowrap;
}
.task svg {
  width: 13px;
  height: 13px;
}
.task.current {
  width: 131px;
  margin-left: 2px;
  padding-left: 11px;
  gap: 9px;
  background: linear-gradient(#1c4d9c, #1c4a94);
  box-shadow: inset 0 0 0 1px #143a78;
}
.keyboard {
  width: 16px;
  height: 13px;
  margin-left: 10px;
}
.tray {
  margin-left: auto;
  width: 120px;
  height: 30px;
  flex: none;
  display: flex;
  align-items: center;
  gap: 1px;
  box-sizing: border-box;
  padding-left: 1px;
  background: linear-gradient(90deg, #2f6cc6 0, #5a9fe6 12%, #8fc0ee 40%, #cfe2f4 100%);
  color: #0c2148;
}
.tray svg {
  width: 16px;
  height: 16px;
}
.tray-arrow {
  width: 16px;
  height: 16px;
  flex: none;
  margin-right: 3px;
  border-radius: 50%;
  background: #d8e8f8;
  border: 1px solid #4a80c8;
  box-sizing: border-box;
  position: relative;
}
.tray-arrow::after {
  content: "";
  position: absolute;
  left: 6px;
  top: 4px;
  width: 4px;
  height: 4px;
  border: solid #2a5ab0;
  border-width: 0 0 2px 2px;
  transform: rotate(45deg);
}
.tray time {
  margin-left: 7px;
}
.watermark {
  position: absolute;
  left: 8px;
  top: 716px;
  color: #7aa8ec;
  pointer-events: none;
  z-index: 2;
  line-height: 1;
}
.watermark strong {
  display: block;
  font: 700 30px/32px "Noto Sans CJK SC", sans-serif;
}
.watermark small {
  display: block;
  margin-top: 2px;
  color: #3d7ad0;
  font: bold 17px "Liberation Sans", sans-serif;
  opacity: 0.6;
}

/* dialogs */
.win {
  position: absolute;
  z-index: 4;
  box-sizing: border-box;
  display: flex;
  flex-direction: column;
  border-radius: 6px 6px 0 0;
  background: #4a7fd4;
}
.ref-win {
  left: 764px;
  top: 2px;
  width: 258px;
  height: 253px;
}
.pick-win {
  left: 921px;
  top: 257px;
  width: 101px;
  height: 73px;
  background: #5a90dc;
}
.win-title {
  height: 28px;
  flex: none;
  display: flex;
  align-items: center;
  gap: 4px;
  padding: 0 5px 0 8px;
  background: linear-gradient(#2a5fc0, #2558b4 30%, #1f4fa8 100%);
  border-radius: 6px 6px 0 0;
  color: #fff;
  font-size: 13px;
  font-weight: 700;
}
.pick-win .win-title {
  background: linear-gradient(#5a90dc, #4a80d0);
}
.win-cube {
  width: 13px;
  height: 13px;
  margin-right: 2px;
}
.win-name {
  margin-right: auto;
}
.cap-btn {
  width: 19px;
  height: 19px;
  flex: none;
  border-radius: 3px;
  background: linear-gradient(135deg, #6a9ae4, #3a6cc8);
  border: 1px solid #fff;
  box-sizing: border-box;
  position: relative;
}
.cap-btn.red {
  background: linear-gradient(135deg, #f0a080, #d8521e);
}
.cap-min {
  position: absolute;
  left: 3px;
  bottom: 3px;
  width: 6px;
  height: 3px;
  background: #fff;
}
.cap-max {
  position: absolute;
  inset: 3px;
  border: 1px solid #fff;
  border-top-width: 3px;
}
.cap-x {
  position: absolute;
  inset: 0;
  background:
    linear-gradient(45deg, transparent 42%, #fff 42% 58%, transparent 58%),
    linear-gradient(-45deg, transparent 42%, #fff 42% 58%, transparent 58%);
}
.win-body {
  flex: 1;
  margin: 0 3px 3px;
  padding: 7px 4px 0 5px;
  background: #ebeaef;
  display: flex;
  flex-direction: column;
  min-height: 0;
}
.ref-list {
  height: 74px;
  flex: none;
  background: #fff;
  border: 1px solid #a8a8ac;
  box-sizing: border-box;
}
.ref-row {
  height: 14px;
  line-height: 14px;
  padding-left: 14px;
  font: 11px/14px "Liberation Mono", monospace;
  letter-spacing: -1.2px;
  white-space: pre;
  box-sizing: border-box;
}
.ref-row.focus {
  border: 1px dotted #222;
  line-height: 12px;
}
.ref-btns {
  margin-top: 12px;
  display: flex;
  gap: 6px;
}
.ref-btns .xbtn {
  height: 20px;
  gap: 3px;
}
.ref-btns svg {
  width: 14px;
  height: 14px;
}
.pressed {
  width: 28px;
  background: #e4ecf8;
  border-width: 2px;
}
.section {
  width: 74px;
}
.ref-select {
  margin-top: 9px;
  display: flex;
  align-items: center;
  height: 17px;
}
.ref-select label {
  width: 31px;
  padding-left: 3px;
  box-sizing: border-box;
}
.ref-combo {
  width: 153px;
  height: 17px;
  box-sizing: border-box;
  background: #fff;
  border: 1px solid #a8a8ac;
  display: flex;
  align-items: center;
  justify-content: space-between;
  padding-left: 4px;
}
.del {
  width: 55px;
  height: 17px;
  margin-left: 4px;
  padding: 0;
  background: #ebeaef;
  border: 1px solid #c8c8cc;
  border-radius: 2px;
  color: #b0b0b4;
  font: 12px "Liberation Sans", "Noto Sans CJK SC", sans-serif;
  white-space: pre;
}
.ref-state {
  margin: 5px -1px 0 -4px;
  padding: 0 0 0 8px;
  min-width: 0;
  height: 41px;
  box-sizing: border-box;
  border: 1px solid #dcdce0;
  border-radius: 3px;
}
.ref-state legend {
  margin-left: 4px;
  padding: 0 4px;
  color: #4a6ca0;
  line-height: 14px;
}
.ref-state p {
  margin: 3px 0 0;
  line-height: 14px;
}
.ref-foot {
  margin: 5px -4px 0 -5px;
  padding-top: 7px;
  border-top: 1px solid #a8a8ac;
  display: flex;
  justify-content: center;
}
.close-btn {
  width: 55px;
}
.pick-body {
  padding: 2px 4px 0;
}
.pick-body p {
  margin: 0 0 0 1px;
  line-height: 14px;
}
.pick-btns {
  margin-top: 5px;
  display: flex;
  justify-content: space-between;
  padding: 0 1px 0 2px;
}
.pick-btns .xbtn {
  width: 38px;
}
.behind-hatch {
  position: absolute;
  left: 988px;
  top: 331px;
  width: 16px;
  height: 6px;
  background: repeating-linear-gradient(45deg, #c8bc5c 0 2px, #efe9b0 2px 3px);
}
</style>
